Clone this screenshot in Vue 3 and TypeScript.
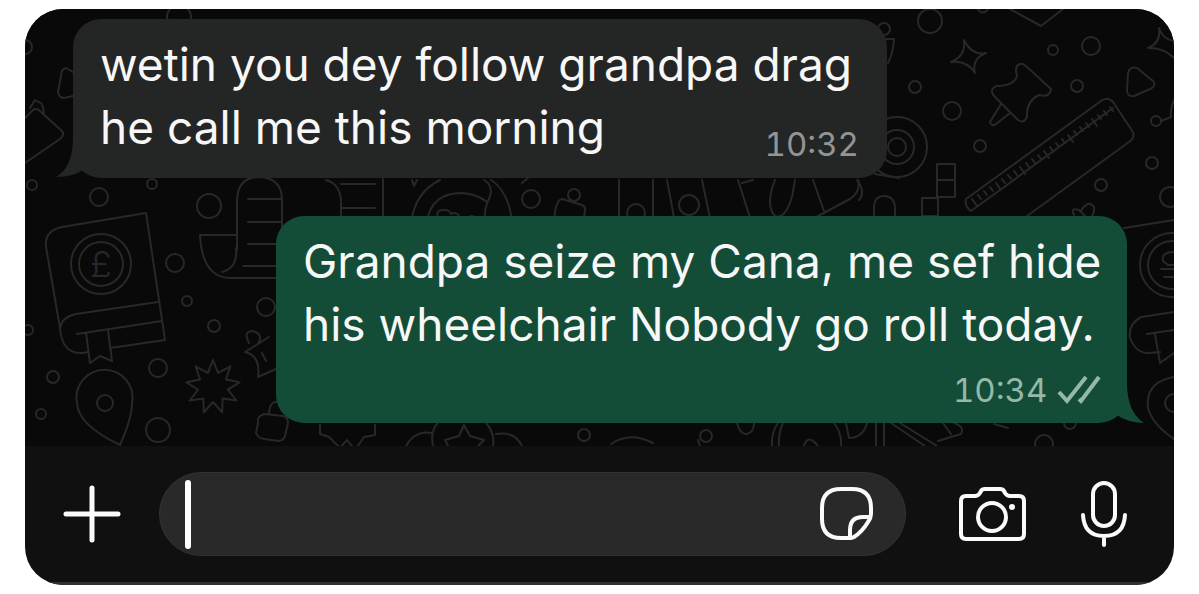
<script setup lang="ts">
import { ref } from 'vue'

type Dot = [x: number, y: number, r: number]

const draft = ref('')

const incoming = ['wetin you dey follow grandpa drag', 'he call me this morning']
const outgoing = ['Grandpa seize my Cana, me sef hide', 'his wheelchair Nobody go roll today.']

const dots: Dot[] = [
  [32, 185, 5], [99, 197, 9], [152, 184, 5], [209, 206, 12], [175, 263, 9],
  [187, 301, 5], [214, 326, 6], [266, 307, 9], [158, 368, 9], [53, 377, 6],
  [41, 414, 5], [158, 430, 12], [105, 403, 8], [28, 330, 5], [25, 47, 7],
  [930, 21, 12], [1053, 50, 5], [1091, 46, 9], [915, 87, 6], [952, 111, 9],
  [1077, 86, 6], [980, 146, 6], [1152, 163, 6], [1101, 185, 6], [1170, 197, 10],
  [1156, 121, 5], [884, 29, 6], [897, 147, 9], [897, 147, 17], [897, 147, 30],
  [531, 199, 9], [636, 213, 9], [689, 205, 10], [574, 195, 6], [584, 435, 6],
  [706, 436, 6], [179, 17, 12], [1044, 444, 9], [1070, 423, 6], [101, 264, 30],
  [101, 264, 22], [1172, 265, 32], [1172, 265, 24], [1174, 403, 9],
]

function burst(cx: number, cy: number, points: number, outer: number, inner: number): string {
  return Array.from({ length: points * 2 }, (_, i) => {
    const a = (Math.PI * i) / points - Math.PI / 2
    const r = i % 2 ? inner : outer
    return `${(cx + r * Math.cos(a)).toFixed(1)},${(cy + r * Math.sin(a)).toFixed(1)}`
  }).join(' ')
}

const ticks = Array.from({ length: 24 }, (_, i) => {
  const x = 972 + i * 6
  const y = 199 - i * 4
  return `M${x} ${y}l${i % 4 ? 3 : 5} ${i % 4 ? 4 : 7}`
}).join('')
</script>

<template>
  <main class="phone">
    <section class="chat" aria-label="Messages">
      <svg class="doodles" viewBox="25 9 1149 437" preserveAspectRatio="xMidYMid slice" aria-hidden="true">
        <circle v-for="(d, i) in dots" :key="i" :cx="d[0]" :cy="d[1]" :r="d[2]" />
        <!-- envelope and tag -->
        <path d="M25 118L33 110Q37 107 42 113L62 131Q65 135 60 139L25 163M30 108L35 100L42 104L44 113" />
        <path d="M73 72L66 68Q61 69 61 76L58 92Q59 98 64 98L73 96" />
        <!-- account book -->
        <path d="M146 213L62 227Q44 231 46 247L60 328Q62 354 82 353L88 352M110 348L165 340L146 213M60 328Q62 317 76 314L158 302M77 334L162 321M86 333L90 363L100 356L112 361L108 330" />
        <text x="101" y="277" text-anchor="middle">£</text>
        <!-- map pin -->
        <path d="M120 445Q132 418 132 403A28 28 0 1 0 77 403Q78 425 120 445Z" />
        <polygon :points="burst(213, 387, 9, 27, 15)" />
        <!-- scroll -->
        <path d="M237 250V200Q238 177 259 177Q282 178 282 200V230M200 235H236M200 235Q202 278 231 278H276M236 248Q238 268 222 272M248 199H281M248 222H281M248 244H276M243 266H276" />
        <path d="M326 180Q341 184 341 203V223M341 184H375M341 208H375M383 179V220" />
        <!-- bell and padlock -->
        <path d="M249 343Q243 332 252 331Q263 333 259 342M245 352L269 337M245 352Q261 356 258 377L276 369M262 353L266 361" />
        <path d="M262 415Q257 417 258 423L256 433Q258 438 264 439L279 441Q284 440 285 436L288 423Q288 417 283 416L264 414ZM269 414Q270 400 278 402" />
        <!-- coin purse -->
        <path d="M411 223Q415 192 440 180M427 222Q431 193 462 193Q477 194 487 202M484 180Q496 187 487 203Q484 212 485 222M491 180Q509 192 512 222M438 220Q435 209 444 210Q450 210 451 214Q458 210 461 221M467 218Q474 213 478 221" />
        <path d="M554 223Q555 200 562 199L582 205Q586 207 585 211L583 223M412 180L414 186L417 180" />
        <path d="M619 180V223M653 180V223M667 180L675 223M702 180L711 223M738 180L752 224M742 183L753 180M775 180Q765 205 775 216Q785 220 792 197L795 180M813 180L824 211M858 180Q861 192 850 199L803 224M522 183L529 177M874 215V206Q875 196 884 196Q894 196 895 207V215" />
        <path d="M859 200Q866 192 857 180M875 174L899 178" />
        <!-- blocks -->
        <path d="M937 164H955V197H937ZM937 180H955M922 198H938V216H922Z" />
        <!-- sparkles and play mark -->
        <path d="M964 40Q972 56 986 53Q971 59 975 73Q967 60 951 62Q966 56 964 40ZM1159 28Q1162 39 1174 41M1174 58Q1165 48 1148 48Q1161 43 1159 28M1010 9L1041 26L1063 9M978 9Q982 16 988 9" />
        <path d="M1128 73Q1130 66 1137 68L1153 81Q1157 86 1150 89L1134 96Q1127 97 1127 90ZM1174 100Q1170 108 1171 117L1161 121" />
        <!-- pushpin -->
        <path d="M1020 64Q1014 66 1017 76Q1014 86 996 86Q989 90 994 96L1018 120Q1024 124 1027 117Q1026 101 1039 95Q1050 98 1051 89L1026 66Q1023 63 1020 64ZM1001 104L990 122Q992 127 996 124L1010 113" />
        <!-- ruler -->
        <path d="M971 211Q964 206 966 199L1101 101Q1108 96 1113 102L1133 132Q1135 138 1129 142L1027 216M971 211L1113 108" />
        <path :d="ticks" />
        <path d="M1074 215Q1070 207 1079 210L1085 216M1081 211Q1088 199 1094 207Q1095 212 1091 218M1124 228L1174 220" />
        <!-- second book and pin -->
        <path d="M1174 252Q1161 252 1163 261L1168 265H1174M1161 269H1174M1164 277H1174" />
        <path d="M1174 312L1141 317Q1128 324 1130 338Q1136 353 1148 353L1160 352M1147 334L1174 330M1155 334L1160 363L1174 353M1174 377Q1145 382 1148 408Q1152 424 1174 439" />
        <!-- lower edge -->
        <path d="M320 425V434L329 437L340 448L347 440L355 450L364 437L375 435V425" />
        <path d="M406 446Q415 430 432 433M438 423Q430 431 433 446M486 423Q495 433 493 446M496 434Q515 431 522 446M448 446L445 440L459 436L464 425L470 436L484 440L478 446M611 444Q630 431 653 443M700 446L698 440M737 423Q740 435 747 434Q754 432 754 423M778 423Q771 433 772 446M783 423Q778 434 779 446M834 423Q842 433 841 446M804 446Q808 433 818 446M846 423L849 438Q863 438 867 423M876 423V446M884 423V446M891 423L925 446M900 423L937 446M943 423L951 434M954 423Q965 427 961 434L938 441M994 424L1008 428" />
        <path d="M885 39L894 39Q893 54 888 63" />
      </svg>

      <article class="bubble incoming">
        <p><span v-for="line in incoming" :key="line">{{ line }}</span></p>
        <time datetime="10:32">10:32</time>
        <svg class="tail" viewBox="0 0 32 40" aria-hidden="true"><path d="M17 0Q17 29 0 39Q18 39 28 31L32 0Z" /></svg>
      </article>

      <article class="bubble outgoing">
        <p><span v-for="line in outgoing" :key="line">{{ line }}</span></p>
        <div class="meta">
          <time datetime="10:34">10:34</time>
          <svg class="checks" viewBox="0 0 44 30" role="img" aria-label="Delivered"><path d="M2 17L10 26L29 2M22 24L24 26L42 2" /></svg>
        </div>
        <svg class="tail" viewBox="0 0 32 40" aria-hidden="true"><path d="M15 0Q15 29 32 40Q14 39 5 32L0 0Z" /></svg>
      </article>
    </section>

    <form class="composer" @submit.prevent>
      <button type="button" class="plus" aria-label="Attach">
        <svg width="58" height="58" viewBox="0 0 58 58"><path d="M29 3V55M3 29H55" /></svg>
      </button>
      <div class="field">
        <span class="caret"></span>
        <input v-model="draft" type="text" aria-label="Message">
        <button type="button" aria-label="Stickers">
          <svg width="54" height="54" viewBox="0 0 54 54">
            <path d="M30 51H21Q2 51 2 32V21Q2 2 21 2H32Q51 2 51 21V27Q51 31 48 35Q42 45 34 50Q32 51 30 51ZM30 51V43Q30 30 43 30H50" />
          </svg>
        </button>
      </div>
      <button type="button" class="camera" aria-label="Camera">
        <svg width="67" height="54" viewBox="0 0 67 54">
          <path d="M7 9H16Q19 9 21 6L22 4Q23 2 26 2H41Q44 2 45 4L46 6Q48 9 51 9H60Q65 9 65 14V47Q65 52 60 52H7Q2 52 2 47V14Q2 9 7 9Z" />
          <circle cx="33" cy="30" r="14" /><circle class="flash" cx="53" cy="20" r="3" />
        </svg>
      </button>
      <button type="button" aria-label="Record voice message">
        <svg width="46" height="66" viewBox="0 0 46 66">
          <rect x="12" y="2" width="22" height="43" rx="11" />
          <path d="M2 34Q3 55 23 55Q43 55 44 34M23 55V64" />
        </svg>
      </button>
    </form>
  </main>
</template>

<style>
body {
  margin: 0;
  background: #fff;
}
</style>

<style scoped>
.phone {
  margin: 9px 25px;
  border-radius: 38px;
  overflow: hidden;
  background: #101010;
  font-family: Inter, "Liberation Sans", sans-serif;
}
.chat {
  position: relative;
  box-sizing: border-box;
  display: flex;
  flex-direction: column;
  gap: 38px;
  padding: 10px 47px 23px 48px;
  background: #090909;
}
.doodles {
  position: absolute;
  inset: 0;
  width: 100%;
  height: 100%;
  fill: none;
  stroke: #282828;
  stroke-width: 2;
  stroke-linecap: round;
  stroke-linejoin: round;
}
.doodles text {
  fill: #282828;
  stroke: none;
  font-size: 36px;
  font-weight: 300;
}
.bubble {
  position: relative;
  box-sizing: border-box;
  display: grid;
  width: 100%;
  padding: 14px 28px 17px;
  border-radius: 28px;
  color: #f7f7f7;
}
.bubble p {
  margin: 0;
  font-size: 46px;
  line-height: 63px;
}
.bubble p span {
  display: block;
  white-space: nowrap;
}
.bubble time {
  font-size: 33px;
  font-variant-numeric: tabular-nums;
  line-height: 34px;
}
.incoming {
  max-width: 814px;
  background: #242625;
}
.incoming p,
.incoming time {
  grid-area: 1 / 1;
}
.incoming p {
  padding-bottom: 2px;
}
.incoming time {
  place-self: end;
  color: #939594;
}
.bubble.outgoing {
  max-width: 851px;
  align-self: flex-end;
  padding: 14px 26px 16px 27px;
  background: #144d37;
}
.bubble.incoming {
  padding-left: 27px;
}
.meta {
  display: flex;
  justify-content: flex-end;
  align-items: center;
  gap: 10px;
  padding-top: 17px;
  color: #94b8a9;
}
.checks {
  width: 44px;
  height: 30px;
  fill: none;
  stroke: currentColor;
  stroke-width: 4;
}
.tail {
  position: absolute;
  bottom: 0;
  width: 32px;
  height: 40px;
}
.incoming .tail {
  left: -17px;
  fill: #242625;
}
.outgoing .tail {
  right: -17px;
  fill: #144d37;
}
.composer {
  display: flex;
  align-items: center;
  padding: 26px 47px 26px 38px;
  border-bottom: 3px solid #303030;
}
.composer button {
  display: block;
  flex: none;
  padding: 0;
  border: 0;
  background: none;
}
.composer svg {
  display: block;
  fill: none;
  stroke: #fafafa;
  stroke-width: 4;
  stroke-linecap: round;
  stroke-linejoin: round;
}
.composer .plus svg {
  stroke-width: 5;
}
.composer .flash {
  fill: #fafafa;
  stroke: none;
}
.field {
  display: flex;
  flex: 1;
  align-items: center;
  box-sizing: border-box;
  min-width: 0;
  height: 84px;
  margin: 0 53px 0 38px;
  padding: 0 31px 0 25px;
  border: 1px solid #333;
  border-radius: 42px;
  background: #292929;
}
.caret {
  flex: none;
  width: 6px;
  height: 69px;
  border-radius: 3px;
  background: #fff;
}
.field input {
  flex: 1;
  min-width: 0;
  padding: 0 12px;
  border: 0;
  outline: 0;
  background: none;
  color: #fff;
  font: inherit;
  font-size: 46px;
}
.composer .camera {
  margin-right: 55px;
}
</style>
